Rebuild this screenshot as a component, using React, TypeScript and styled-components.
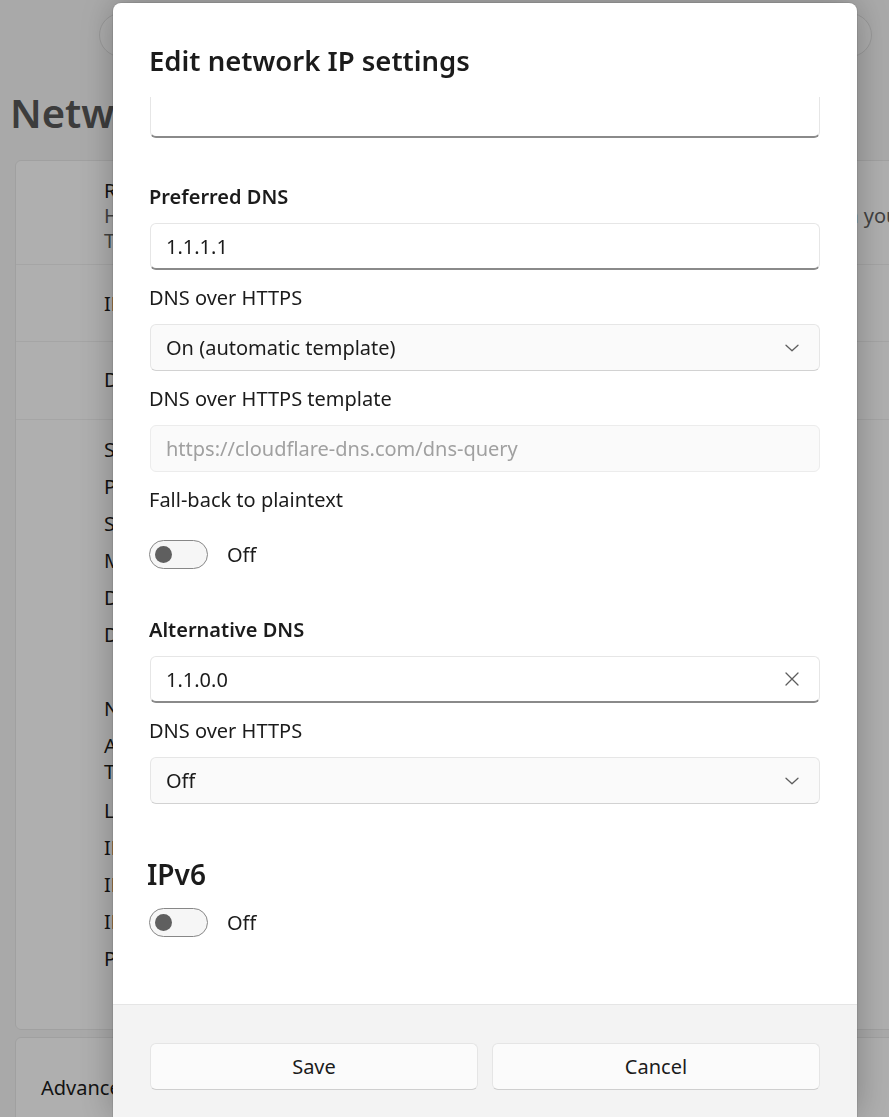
import React, { useLayoutEffect, useRef } from 'react';
import styled, { createGlobalStyle } from 'styled-components';

const Global = createGlobalStyle`
  html, body { margin: 0; padding: 0; }
  body {
    width: 889px;
    height: 1117px;
    overflow: hidden;
    background: #f3f3f3;
    font-family: "Noto Sans", "Open Sans", sans-serif;
    color: #1b1b1b;
  }
  * { box-sizing: border-box; }
`;

/* ---------- background settings page ---------- */
const Page = styled.div`
  position: relative;
  width: 889px;
  height: 1117px;
  overflow: hidden;
  background: #f3f3f3;
  display: flex;
  flex-direction: column;
`;

const SearchPill = styled.div`
  margin: 13px 0 0 99px;
  width: 773px;
  height: 44px;
  flex: none;
  border: 1px solid #dcdcdc;
  border-radius: 22px;
  background: #f7f7f7;
`;

const PageTitle = styled.h1`
  margin: 30px 0 0 10px;
  font-size: 40px;
  line-height: 52px;
  font-weight: 600;
  color: #575757;
  white-space: nowrap;
`;

const Card = styled.div<{ $top: number }>`
  margin: ${(p) => p.$top}px 0 0 15px;
  width: 900px;
  flex: none;
  background: #fbfbfb;
  border: 1px solid #e6e6e6;
  border-radius: 6px;
  display: flex;
  flex-direction: column;
`;

const CardRow = styled.div<{ $h: number; $pt: number }>`
  height: ${(p) => p.$h}px;
  padding: ${(p) => p.$pt}px 0 0 88px;
  border-bottom: 1px solid #ececec;
  font-size: 20px;
  line-height: 25px;
  white-space: nowrap;
`;

const RowLine = styled.div<{ $muted?: boolean }>`
  color: ${(p) => (p.$muted ? '#5e5e5e' : '#1b1b1b')};
`;

const PropList = styled.div`
  padding: 12px 0 58px 88px;
  display: flex;
  flex-direction: column;
  font-size: 20px;
  line-height: 25px;
  white-space: nowrap;
`;

const PropItem = styled.div<{ $gap?: number }>`
  margin-top: ${(p) => p.$gap ?? 12}px;
`;

const AdvancedRow = styled.div`
  height: 100px;
  padding: 37px 0 0 25px;
  font-size: 20px;
  line-height: 25px;
  white-space: nowrap;
`;

const Scrim = styled.div`
  position: fixed;
  inset: 0;
  background: rgba(0, 0, 0, 0.3);
`;

/* ---------- dialog ---------- */
const Dialog = styled.div`
  position: fixed;
  left: 113px;
  top: 3px;
  width: 744px;
  height: 1114px;
  background: #ffffff;
  border-radius: 8px 8px 0 0;
  box-shadow: 0 0 36px rgba(0, 0, 0, 0.28), 0 0 0 1px rgba(0, 0, 0, 0.08);
  display: flex;
  flex-direction: column;
  overflow: hidden;
`;

const DialogHeader = styled.div`
  flex: none;
  padding: 40px 36px 18px;
`;

const DialogTitle = styled.h2`
  margin: 0;
  font-size: 27.5px;
  line-height: 36px;
  font-weight: 600;
  color: #1b1b1b;
`;

const ScrollArea = styled.div`
  flex: 1;
  min-height: 0;
  overflow-y: auto;
  scrollbar-width: none;
  padding: 0 37px 80px 37px;
  &::-webkit-scrollbar { display: none; }
`;

const Section = styled.div<{ $top: number }>`
  margin-top: ${(p) => p.$top}px;
  display: flex;
  flex-direction: column;
  gap: 14px;
`;

const Field = styled.div`
  display: flex;
  flex-direction: column;
  gap: 12px;
`;

const Label = styled.div<{ $strong?: boolean }>`
  margin-left: -1px;
  font-size: 20px;
  line-height: 28px;
  font-weight: ${(p) => (p.$strong ? 600 : 400)};
  color: #1b1b1b;
`;

const Box = styled.div<{ $kind: 'text' | 'select' | 'disabled' }>`
  height: 47px;
  display: flex;
  align-items: center;
  padding: 0 20px 0 15px;
  border-radius: 6px;
  font-size: 20px;
  border: 1px solid ${(p) => (p.$kind === 'disabled' ? '#ececec' : '#e6e6e6')};
  border-bottom: ${(p) =>
    p.$kind === 'text' ? '2px solid #8a8a8a' : p.$kind === 'select' ? '1px solid #d2d2d2' : '1px solid #ececec'};
  background: ${(p) => (p.$kind === 'text' ? '#ffffff' : '#fafafa')};
  color: ${(p) => (p.$kind === 'disabled' ? '#a0a0a0' : '#1b1b1b')};
`;

const BoxText = styled.span`
  flex: 1;
  white-space: nowrap;
`;

const Icon = styled.svg`
  flex: none;
  color: #5d5d5d;
`;

const Heading = styled.div`
  margin: 52px 0 0 -3px;
  font-size: 28px;
  line-height: 36px;
  font-weight: 600;
  color: #1b1b1b;
`;

const ToggleRow = styled.div<{ $top: number }>`
  margin-top: ${(p) => p.$top}px;
  display: flex;
  align-items: center;
  gap: 19px;
  height: 29px;
  font-size: 20px;
`;

const Toggle = styled.div`
  width: 59px;
  height: 29px;
  margin-left: -1px;
  border: 1px solid #878787;
  border-radius: 15px;
  background: #f6f6f6;
  display: flex;
  align-items: center;
  padding-left: 5px;
`;

const Knob = styled.div`
  width: 17px;
  height: 17px;
  border-radius: 50%;
  background: #5f5f5f;
`;

const Footer = styled.div`
  flex: none;
  height: 113px;
  border-top: 1px solid #e5e5e5;
  background: #f3f3f3;
  padding: 38px 37px 0;
  display: grid;
  grid-template-columns: 1fr 1fr;
  column-gap: 14px;
  align-items: start;
`;

const Button = styled.button`
  height: 47px;
  border: 1px solid #e5e5e5;
  border-bottom-color: #cfcfcf;
  border-radius: 6px;
  background: #fbfbfb;
  font-family: inherit;
  font-size: 20px;
  color: #1b1b1b;
  padding: 0;
`;

const Chevron = () => (
  <Icon width="14" height="8" viewBox="0 0 14 8" fill="none">
    <path d="M1 1.2 L7 6.8 L13 1.2" stroke="currentColor" strokeWidth="1.3" strokeLinecap="round" strokeLinejoin="round" />
  </Icon>
);

const Clear = () => (
  <Icon width="14" height="14" viewBox="0 0 14 14" fill="none">
    <path d="M1 1 L13 13 M13 1 L1 13" stroke="currentColor" strokeWidth="1.3" strokeLinecap="round" />
  </Icon>
);

const SwitchOff = ({ top }: { top: number }) => (
  <ToggleRow $top={top}>
    <Toggle>
      <Knob />
    </Toggle>
    <span>Off</span>
  </ToggleRow>
);

export default function App() {
  const scrollRef = useRef<HTMLDivElement>(null);
  useLayoutEffect(() => {
    if (scrollRef.current) scrollRef.current.scrollTop = 46;
  }, []);

  return (
    <>
      <Global />
      <Page>
        <SearchPill />
        <PageTitle>Network &amp; internet › Wi-Fi</PageTitle>
        <Card $top={21}>
          <CardRow $h={104} $pt={17}>
            <RowLine>Random hardware addresses</RowLine>
            <RowLine $muted>Help protect your privacy by making it harder for apps to track your device when you connect</RowLine>
            <RowLine $muted>The setting takes effect the next time you connect to this network.</RowLine>
          </CardRow>
          <CardRow $h={77} $pt={26}>
            <RowLine>IP assignment:</RowLine>
          </CardRow>
          <CardRow $h={78} $pt={25}>
            <RowLine>DNS server assignment:</RowLine>
          </CardRow>
          <PropList>
            <PropItem $gap={5}>SSID:</PropItem>
            <PropItem>Protocol:</PropItem>
            <PropItem>Security type:</PropItem>
            <PropItem>Manufacturer:</PropItem>
            <PropItem>Description:</PropItem>
            <PropItem>Driver version:</PropItem>
            <PropItem $gap={49}>Network band:</PropItem>
            <PropItem>Aggregated link speed (Receive/</PropItem>
            <PropItem $gap={1}>Transmit):</PropItem>
            <PropItem $gap={14}>Link-local IPv6 address:</PropItem>
            <PropItem>IPv6 DNS servers:</PropItem>
            <PropItem>IPv4 address:</PropItem>
            <PropItem>IPv4 DNS servers:</PropItem>
            <PropItem>Physical address (MAC):</PropItem>
          </PropList>
        </Card>
        <Card $top={7}>
          <AdvancedRow>Advanced network settings</AdvancedRow>
        </Card>
        <Scrim />
        <Dialog>
          <DialogHeader>
            <DialogTitle>Edit network IP settings</DialogTitle>
          </DialogHeader>
          <ScrollArea ref={scrollRef}>
            <Section $top={0}>
              <Field>
                <Label>Gateway</Label>
                <Box $kind="text" />
              </Field>
            </Section>
            <Section $top={45}>
              <Field>
                <Label $strong>Preferred DNS</Label>
                <Box $kind="text"><BoxText>1.1.1.1</BoxText></Box>
              </Field>
              <Field>
                <Label>DNS over HTTPS</Label>
                <Box $kind="select"><BoxText>On (automatic template)</BoxText><Chevron /></Box>
              </Field>
              <Field>
                <Label>DNS over HTTPS template</Label>
                <Box $kind="disabled"><BoxText>https://cloudflare-dns.com/dns-query</BoxText></Box>
              </Field>
              <Label>Fall-back to plaintext</Label>
            </Section>
            <SwitchOff top={26} />
            <Section $top={47}>
              <Field>
                <Label $strong>Alternative DNS</Label>
                <Box $kind="text"><BoxText>1.1.0.0</BoxText><Clear /></Box>
              </Field>
              <Field>
                <Label>DNS over HTTPS</Label>
                <Box $kind="select"><BoxText>Off</BoxText><Chevron /></Box>
              </Field>
            </Section>
            <Heading>IPv6</Heading>
            <SwitchOff top={16} />
          </ScrollArea>
          <Footer>
            <Button>Save</Button>
            <Button>Cancel</Button>
          </Footer>
        </Dialog>
      </Page>
    </>
  );
}
